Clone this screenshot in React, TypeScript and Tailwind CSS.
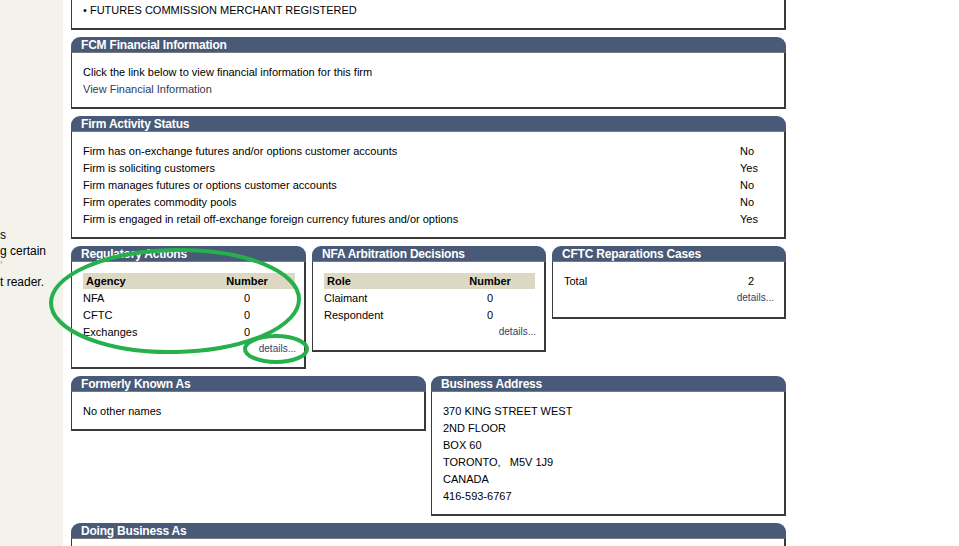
import type { ReactNode } from 'react'

const font = "font-['Liberation_Sans',Arial,Helvetica,sans-serif]"

function Panel({ title, children, className = '' }: { title: string; children: ReactNode; className?: string }) {
  return (
    <div className={`flex flex-col ${className}`}>
      <div className="h-[15px] rounded-t-[9px] bg-[#485a78] pt-[1px] pl-[10px] text-[12px] font-bold leading-[14px] tracking-[-0.2px] text-white">
        {title}
      </div>
      <div className="border border-r-2 border-b-2 border-[#3a3a3a] border-t-[#7a7a7a] bg-white px-[11px]">{children}</div>
    </div>
  )
}

function Details() {
  return <div className="-mr-[1px] h-[17px] text-right text-[10px] leading-[17px] text-[#33406a]">details...</div>
}

function CountTable({ head, rows, wide }: { head: string; rows: [string, string][]; wide?: boolean }) {
  const cols = wide ? 'grid-cols-[1fr_96px]' : 'grid-cols-[1fr_90px]'
  return (
    <div className="-mr-[2px] pt-[11px] pb-[10px]">
      <div className={`grid h-[16px] ${cols} bg-[#dcd8c2] font-bold leading-[16px]`}>
        <span className="pl-[3px]">{head}</span>
        <span className="text-center">Number</span>
      </div>
      {rows.map(([k, v]) => (
        <div key={k} className={`grid h-[17px] ${cols} pt-[1px] leading-[16px]`}>
          <span>{k}</span>
          <span className="text-center">{v}</span>
        </div>
      ))}
      <Details />
    </div>
  )
}

const activity: [string, string][] = [
  ['Firm has on-exchange futures and/or options customer accounts', 'No'],
  ['Firm is soliciting customers', 'Yes'],
  ['Firm manages futures or options customer accounts', 'No'],
  ['Firm operates commodity pools', 'No'],
  ['Firm is engaged in retail off-exchange foreign currency futures and/or options', 'Yes'],
]

const address = ['370 KING STREET WEST', '2ND FLOOR', 'BOX 60', 'TORONTO,   M5V 1J9', 'CANADA', '416-593-6767']

export default function App() {
  return (
    <div className={`relative flex h-[546px] w-[959px] overflow-hidden bg-white text-[11px] text-black ${font}`}>
      <aside className="w-[63px] shrink-0 overflow-hidden bg-[#f3f2eb] pt-[228px] text-[12px] leading-[15.5px] whitespace-nowrap">
        <div>s</div>
        <div>g certain</div>
        <div className="text-[#55c4ee]">'</div>
        <div>t reader.</div>
      </aside>

      <main className="ml-[8px] flex w-[715px] flex-col gap-[7px]">
        <div className="border border-t-0 border-r-2 border-b-2 border-[#3a3a3a] bg-white px-[11px] pt-[2px] pb-[9px] leading-[17px]">
          • FUTURES COMMISSION MERCHANT REGISTERED
        </div>

        <Panel title="FCM Financial Information">
          <div className="pt-[11px] pb-[9px] leading-[17px]">
            <div>Click the link below to view financial information for this firm</div>
            <div className="text-[#2e3b5c]">View Financial Information</div>
          </div>
        </Panel>

        <Panel title="Firm Activity Status">
          <div className="pt-[11px] pb-[9px] leading-[17px]">
            {activity.map(([k, v]) => (
              <div key={k} className="grid grid-cols-[1fr_33px]">
                <span>{k}</span>
                <span>{v}</span>
              </div>
            ))}
          </div>
        </Panel>

        <div className="flex items-start gap-[6px]">
          <Panel title="Regulatory Actions" className="w-[235px]">
            <CountTable head="Agency" wide rows={[['NFA', '0'], ['CFTC', '0'], ['Exchanges', '0']]} />
          </Panel>
          <Panel title="NFA Arbitration Decisions" className="w-[234px]">
            <CountTable head="Role" rows={[['Claimant', '0'], ['Respondent', '0']]} />
          </Panel>
          <Panel title="CFTC Reparations Cases" className="w-[234px]">
            <div className="pt-[11px] pb-[11px]">
              <div className="grid h-[16px] grid-cols-[1fr_44px] leading-[16px]">
                <span>Total</span>
                <span className="text-center">2</span>
              </div>
              <Details />
            </div>
          </Panel>
        </div>

        <div className="flex items-start gap-[5px]">
          <Panel title="Formerly Known As" className="w-[355px]">
            <div className="pt-[11px] pb-[9px] leading-[17px]">No other names</div>
          </Panel>
          <Panel title="Business Address" className="w-[355px]">
            <div className="pt-[11px] pb-[9px] leading-[17px]">
              {address.map((l) => (
                <div key={l} className="whitespace-pre">{l}</div>
              ))}
            </div>
          </Panel>
        </div>

        <Panel title="Doing Business As">
          <div className="h-[40px]" />
        </Panel>
      </main>

      <svg className="pointer-events-none absolute inset-0" width="959" height="546">
        <ellipse cx="175" cy="301" rx="124" ry="51" fill="none" stroke="#26b04c" strokeWidth="4" transform="rotate(-1 175 301)" />
        <ellipse cx="276" cy="349" rx="31" ry="13" fill="none" stroke="#26b04c" strokeWidth="4" />
      </svg>
    </div>
  )
}
